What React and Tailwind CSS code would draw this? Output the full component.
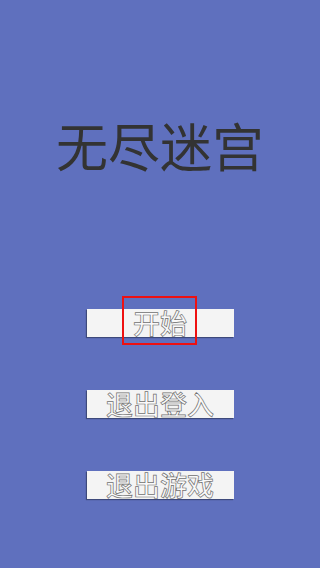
const cjk = { fontFamily: '"Noto Sans CJK SC", "Noto Sans", sans-serif' };

function MenuButton({ label, focused }) {
  return (
    <button
      type="button"
      className="relative w-[147px] h-[28px] bg-[#f4f4f4] shadow-[-1px_1px_1px_rgba(0,0,0,0.35)] flex items-center justify-center"
    >
      <span
        className="text-[27px] leading-[28px] font-medium text-[#fafafa] [-webkit-text-stroke:0.7px_#707070]"
        style={cjk}
      >
        {label}
      </span>
      {focused && (
        <span className="absolute left-[35px] top-[-13px] w-[75px] h-[49px] border-2 border-[#ee1111]" />
      )}
    </button>
  );
}

export default function App() {
  return (
    <div className="w-[320px] h-[568px] bg-[#5f70be] flex flex-col items-center overflow-hidden" style={cjk}>
      <h1 className="mt-[119px] text-[52px] leading-[52px] text-[#333333] font-normal">无尽迷宫</h1>
      <div className="mt-[138px] flex flex-col items-center gap-[53px]">
        <MenuButton label="开始" focused />
        <MenuButton label="退出登入" />
        <MenuButton label="退出游戏" />
      </div>
    </div>
  );
}
